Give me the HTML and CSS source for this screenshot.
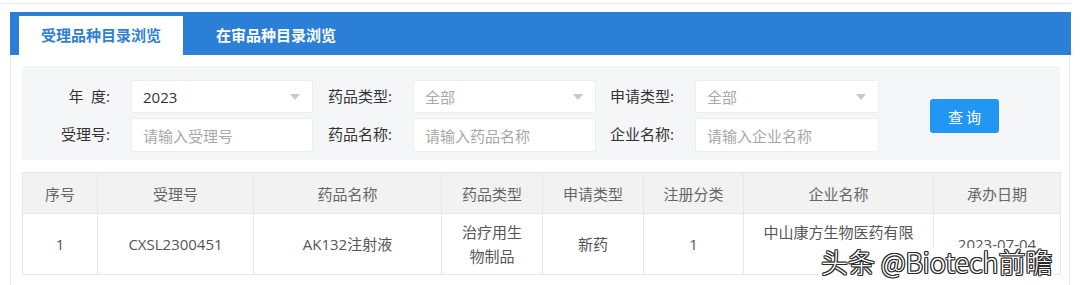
FILE: index.html
```html
<!DOCTYPE html>
<html lang="zh-CN">
<head>
  <meta charset="UTF-8" />
  <title>受理品种目录浏览</title>
  <link rel="stylesheet" href="styles.css">
</head>
<body>

  <div class="page">
    <div class="tabs">
      <div class="tab active">受理品种目录浏览</div>
      <div class="tab">在审品种目录浏览</div>
    </div>

    <div class="panel">
      <div class="filter">
        <div class="fields">
          <label class="label">年&ensp;度:</label>
          <div class="input select"><span class="value">2023</span><i class="caret"></i></div>
          <label class="label">药品类型:</label>
          <div class="input select"><span class="muted">全部</span><i class="caret"></i></div>
          <label class="label">申请类型:</label>
          <div class="input select"><span class="muted">全部</span><i class="caret"></i></div>

          <label class="label">受理号:</label>
          <div class="input"><span class="muted">请输入受理号</span></div>
          <label class="label">药品名称:</label>
          <div class="input"><span class="muted">请输入药品名称</span></div>
          <label class="label">企业名称:</label>
          <div class="input"><span class="muted">请输入企业名称</span></div>
        </div>
        <button class="search">查询</button>
      </div>

      <table>
        <colgroup>
          <col style="width:75px"><col style="width:156px"><col style="width:188px"><col style="width:101px">
          <col style="width:101px"><col style="width:100px"><col style="width:190px"><col style="width:127px">
        </colgroup>
        <tr>
          <th>序号</th><th>受理号</th><th>药品名称</th><th>药品类型</th>
          <th>申请类型</th><th>注册分类</th><th>企业名称</th><th>承办日期</th>
        </tr>
        <tr>
          <td>1</td>
          <td>CXSL2300451</td>
          <td>AK132注射液</td>
          <td>治疗用生物制品</td>
          <td>新药</td>
          <td>1</td>
          <td>中山康方生物医药有限公司</td>
          <td>2023-07-04</td>
        </tr>
      </table>
    </div>
  </div>

  <div class="watermark">头条 @Biotech前瞻</div>

</body>
</html>
```

FILE: styles.css
```css
html, body {
  margin: 0;
  padding: 0;
  background: #fff;
  font-family: "Open Sans", "Noto Sans CJK SC", sans-serif;
  font-size: 15px;
  color: #333;
  overflow: hidden;
}

.page {
  width: 1071px;
  margin-top: 3px;
  border-top: 1px solid #e6e6e6;
}

/* tabs */
.tabs {
  display: flex;
  align-items: flex-end;
  height: 43px;
  margin: 8px 0 0 10px;
  padding-left: 9px;
  background: #2b7fd6;
}

.tab {
  height: 39px;
  line-height: 39px;
  padding: 0 33px;
  font-weight: bold;
  color: #fff;
}

.tab.active {
  width: 164px;
  padding: 0;
  text-align: center;
  background: #fff;
  color: #2f7fd3;
}

/* content */
.panel {
  width: 1038px;
  height: 219px;
  margin-left: 10px;
  padding: 11px 9px 0 11px;
  border-left: 1px solid #e8e8e8;
  border-right: 1px solid #e8e8e8;
}

.filter {
  display: flex;
  align-items: flex-start;
  height: 94px;
  background: #f5f6f8;
}

.fields {
  display: grid;
  grid-template-columns: 109px 182px 100px 183px 99px 184px;
  grid-template-rows: 33px 34px;
  row-gap: 5px;
  padding-top: 14px;
}

.label {
  text-align: right;
  padding-right: 21px;
  line-height: 33px;
  color: #333;
}

.input {
  display: flex;
  align-items: center;
  justify-content: space-between;
  padding: 0 12px 0 11px;
  background: #fff;
  border: 1px solid #eeeeee;
  border-radius: 2px;
}

.value {
  color: #333;
}

.muted {
  color: #a8a8a8;
}

.caret {
  width: 0;
  height: 0;
  border-left: 5px solid transparent;
  border-right: 5px solid transparent;
  border-top: 6px solid #c8c8c8;
}

.search {
  width: 69px;
  height: 34px;
  margin: 33px 0 0 51px;
  padding: 0 0 0 3px;
  border: 0;
  border-radius: 3px;
  background: #2196f3;
  color: #fff;
  font: inherit;
  letter-spacing: 3px;
}

/* table */
table {
  width: 1038px;
  margin-top: 12px;
  border-collapse: collapse;
  table-layout: fixed;
}

th, td {
  border: 1px solid #e6e6e6;
  text-align: center;
  padding: 0 15px;
}

th {
  height: 40px;
  background: #f2f2f2;
  font-weight: normal;
  color: #666;
}

td {
  height: 60px;
  line-height: 24px;
  color: #555;
}

.watermark {
  position: absolute;
  left: 819px;
  top: 248px;
  padding: 0 2px;
  line-height: 28px;
  font-size: 27px;
  font-family: "Noto Sans CJK SC", sans-serif;
  font-weight: 300;
  color: #fff;
  background: #fff;
  text-shadow: 1px 0 0 #2a2a2a, -1px 0 0 #2a2a2a, 0 1px 0 #2a2a2a, 0 -1px 0 #2a2a2a,
               1px 1px 0 #2a2a2a, -1px -1px 0 #2a2a2a, 1px -1px 0 #2a2a2a, -1px 1px 0 #2a2a2a;
}
```
